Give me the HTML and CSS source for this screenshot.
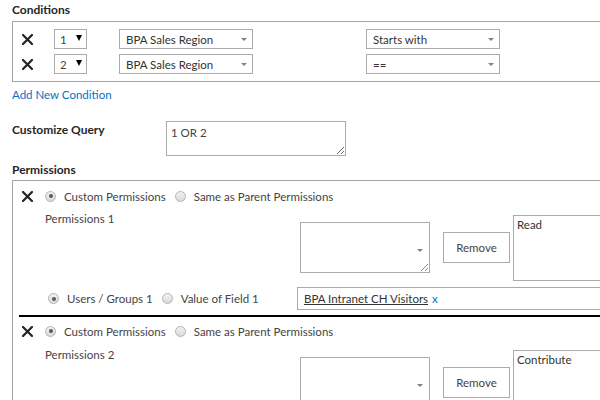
FILE: index.html
```html
<!DOCTYPE html>
<html>
<head>
<meta charset="utf-8">
<link rel="stylesheet" href="styles.css">
</head>
<body>
<div class="page">
  <div class="heading h-cond">Conditions</div>
  <div class="cond-box">
    <div class="cond-row">
      <span class="xicon"><svg width="11" height="11" viewBox="0 0 11 11"><path d="M1 1 L10 10 M10 1 L1 10" stroke="#222" stroke-width="2.2" stroke-linecap="square"/></svg></span>
      <div class="numsel"><span class="num">1</span><span class="blk"></span></div>
      <div class="sel field"><span>BPA Sales Region</span><span class="tri"></span></div>
      <div class="sel op"><span>Starts with</span><span class="tri"></span></div>
    </div>
    <div class="cond-row">
      <span class="xicon"><svg width="11" height="11" viewBox="0 0 11 11"><path d="M1 1 L10 10 M10 1 L1 10" stroke="#222" stroke-width="2.2" stroke-linecap="square"/></svg></span>
      <div class="numsel"><span class="num">2</span><span class="blk"></span></div>
      <div class="sel field"><span>BPA Sales Region</span><span class="tri"></span></div>
      <div class="sel op"><span>==</span><span class="tri"></span></div>
    </div>
  </div>
  <a class="add-link">Add New Condition</a>

  <div class="query-row">
    <div class="heading q-label">Customize Query</div>
    <textarea class="query-ta">1 OR 2</textarea>
  </div>

  <div class="heading h-perm">Permissions</div>
  <div class="perm-box">
    <div class="entry first">
      <div class="radio-row">
        <span class="xicon"><svg width="11" height="11" viewBox="0 0 11 11"><path d="M1 1 L10 10 M10 1 L1 10" stroke="#222" stroke-width="2.2" stroke-linecap="square"/></svg></span>
        <span class="radio on"></span><span class="rlabel">Custom Permissions</span>
        <span class="radio"></span><span class="rlabel">Same as Parent Permissions</span>
      </div>
      <div class="ctrl-row">
        <div class="plabel">Permissions 1</div>
        <div class="picker"><span class="tri"></span><span class="grip"></span></div>
        <div class="btn">Remove</div>
        <div class="list">Read</div>
      </div>
      <div class="users-row">
        <div class="utype">
          <span class="radio on"></span><span class="rlabel">Users / Groups 1</span>
          <span class="radio"></span><span class="rlabel">Value of Field 1</span>
        </div>
        <div class="people"><span class="pname">BPA Intranet CH Visitors</span><span class="px">x</span></div>
      </div>
    </div>
    <div class="entry second">
      <div class="radio-row">
        <span class="xicon"><svg width="11" height="11" viewBox="0 0 11 11"><path d="M1 1 L10 10 M10 1 L1 10" stroke="#222" stroke-width="2.2" stroke-linecap="square"/></svg></span>
        <span class="radio on"></span><span class="rlabel">Custom Permissions</span>
        <span class="radio"></span><span class="rlabel">Same as Parent Permissions</span>
      </div>
      <div class="ctrl-row">
        <div class="plabel">Permissions 2</div>
        <div class="picker"><span class="tri"></span></div>
        <div class="btn">Remove</div>
        <div class="list">Contribute</div>
      </div>
    </div>
  </div>
</div>
</body>
</html>
```

FILE: styles.css
```css
html, body {
  margin: 0;
  padding: 0;
  background: #fff;
  overflow: hidden;
}
body {
  width: 600px;
  height: 400px;
  font-family: "Segoe UI", Lato, "Open Sans", sans-serif;
  font-size: 11.5px;
  color: #444;
}
.page {
  padding-left: 12px;
  width: 588px;
}
.heading {
  font-weight: bold;
  color: #262626;
  font-size: 12px;
  line-height: 16px;
}
.h-cond {
  padding-top: 2px;
  height: 19px;
}
.cond-box {
  border: 1px solid #a6a6a6;
  border-right: none;
  padding: 7px 0 7px 9px;
  display: flex;
  flex-direction: column;
  gap: 5px;
}
.cond-row {
  display: flex;
  align-items: center;
  height: 20px;
}
.xicon {
  width: 11px;
  height: 11px;
  display: inline-flex;
  flex: none;
}
.numsel {
  margin-left: 21px;
  width: 31px;
  height: 18px;
  border: 1px solid #ababab;
  display: flex;
  align-items: center;
  color: #444;
}
.numsel .num {
  margin-left: 5px;
  width: 16px;
}
.numsel .blk {
  width: 0;
  height: 0;
  border-left: 3.5px solid transparent;
  border-right: 3.5px solid transparent;
  border-top: 6px solid #000;
  margin-top: -2px;
}
.sel {
  height: 18px;
  border: 1px solid #ababab;
  display: flex;
  align-items: center;
  justify-content: space-between;
  padding: 0 5px 0 6px;
  color: #333;
}
.field {
  margin-left: 32px;
  width: 121px;
}
.op {
  margin-left: 113px;
  width: 121px;
}
.tri {
  width: 0;
  height: 0;
  border-left: 3px solid transparent;
  border-right: 3px solid transparent;
  border-top: 3px solid #808080;
}
.add-link {
  display: block;
  color: #0072c6;
  line-height: 16px;
  margin-top: 5px;
  height: 16px;
}
.query-row {
  display: flex;
  margin-top: 18px;
  height: 35px;
}
.q-label {
  width: 154px;
  margin-top: 1px;
}
.query-ta {
  width: 170px;
  height: 27px;
  border: 1px solid #ababab;
  padding: 3px 4px;
  margin: 0;
  resize: both;
  font-family: inherit;
  font-size: 11.5px;
  color: #444;
  line-height: 16px;
}
.h-perm {
  margin-top: 6px;
  height: 18px;
}
.perm-box {
  border: 1px solid #a6a6a6;
  border-right: none;
  border-bottom: none;
  height: 219px;
  overflow: hidden;
}
.entry {
  margin-left: 6px;
}
.entry.first {
  padding-top: 7px;
  border-bottom: 2px solid #000;
  padding-bottom: 5px;
}
.entry.second {
  padding-top: 6px;
}
.radio-row {
  display: flex;
  align-items: center;
  height: 16px;
  padding-left: 3px;
}
.radio {
  display: inline-block;
  width: 9px;
  height: 9px;
  border: 1px solid #b4b4b4;
  border-radius: 50%;
  background: linear-gradient(#f2f2f2, #d9d9d9);
  position: relative;
  flex: none;
}
.radio.on::after {
  content: "";
  position: absolute;
  left: 2.5px;
  top: 2.5px;
  width: 4px;
  height: 4px;
  border-radius: 50%;
  background: #5a5a5a;
}
.radio-row .xicon + .radio {
  margin-left: 12px;
}
.rlabel {
  margin-left: 8px;
  margin-right: 9px;
  white-space: nowrap;
}
.ctrl-row {
  display: flex;
  align-items: flex-start;
  margin-top: 7px;
}
.entry.second .ctrl-row {
  margin-top: 8px;
}
.plabel {
  width: 281px;
  flex: none;
  padding-left: 26px;
  line-height: 16px;
  box-sizing: border-box;
}
.picker {
  margin-top: 11px;
  width: 128px;
  height: 49px;
  border: 1px solid #ababab;
  position: relative;
  flex: none;
}
.entry.second .picker {
  margin-top: 10px;
}
.picker .tri {
  position: absolute;
  right: 6px;
  top: 26px;
}
.picker .grip {
  position: absolute;
  right: 1px;
  bottom: 1px;
  width: 7px;
  height: 7px;
  background: linear-gradient(135deg, transparent 48%, #888 48%, #888 56%, transparent 56%, transparent 76%, #888 76%, #888 84%, transparent 84%);
}
.btn {
  margin-top: 21px;
  margin-left: 13px;
  width: 65px;
  height: 29px;
  border: 1px solid #ababab;
  display: flex;
  align-items: center;
  justify-content: center;
  color: #444;
  flex: none;
}
.entry.second .btn {
  margin-top: 20px;
}
.list {
  margin-top: 4px;
  margin-left: 3px;
  flex: 1;
  height: 60px;
  border: 1px solid #ababab;
  border-right: none;
  padding: 2px 3px;
  line-height: 14px;
  color: #333;
}
.entry.second .list {
  margin-top: 3px;
}
.users-row {
  display: flex;
  align-items: center;
  margin-top: 6px;
  height: 23px;
  padding-left: 29px;
}
.utype {
  width: 249px;
  flex: none;
  display: flex;
  align-items: center;
}
.people {
  flex: 1;
  height: 21px;
  border: 1px solid #ababab;
  border-right: none;
  display: flex;
  align-items: center;
  padding-left: 6px;
}
.pname {
  text-decoration: underline;
  color: #333;
}
.px {
  color: #0072c6;
  margin-left: 4px;
}
```
